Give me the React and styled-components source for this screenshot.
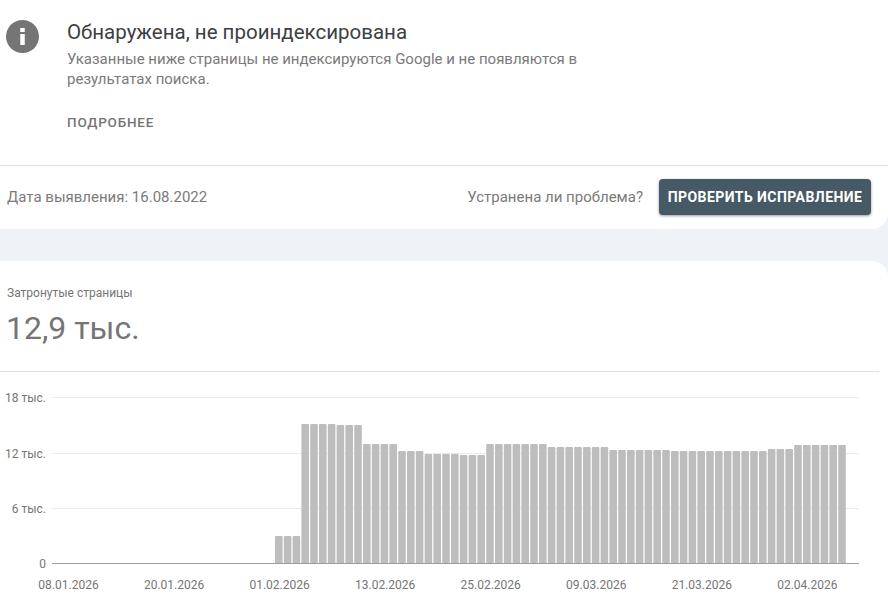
import React from "react"
import styled, { createGlobalStyle } from "styled-components"

const GlobalStyle = createGlobalStyle`
  html, body {
    margin: 0;
    padding: 0;
    height: 100%;
    overflow: hidden;
    background: #eff3f8;
    font-family: Roboto, "Noto Sans", sans-serif;
  }
`

const Page = styled.div`
  width: 888px;
  height: 607px;
  display: flex;
  flex-direction: column;
  gap: 32px;
  overflow: hidden;
`

const IssueCard = styled.section`
  background: #fff;
  height: 229px;
  border-bottom-right-radius: 16px;
  display: flex;
  flex-direction: column;
`

const IssueHead = styled.div`
  height: 166px;
  box-sizing: border-box;
  padding: 20px 0 0 6px;
  display: flex;
  gap: 28px;
  border-bottom: 1px solid #e0e0e0;
`

const InfoIcon = styled.svg`
  width: 33px;
  height: 33px;
  flex: none;
`

const IssueText = styled.div`
  width: 540px;
`

const Title = styled.h1`
  margin: 0;
  font-size: 20.5px;
  line-height: 24px;
  font-weight: 400;
  color: #3c4043;
`

const Description = styled.p`
  margin: 5px 0 0;
  font-size: 15px;
  line-height: 20px;
  color: #7a7a7a;
`

const MoreLink = styled.a`
  display: block;
  margin-top: 25px;
  font-size: 13.5px;
  line-height: 16px;
  font-weight: 500;
  letter-spacing: 0.8px;
  color: #757575;
`

const IssueFooter = styled.div`
  flex: 1;
  display: flex;
  align-items: flex-start;
  justify-content: space-between;
  padding: 13px 17px 0 7px;
`

const FoundDate = styled.span`
  font-size: 15px;
  line-height: 36px;
  color: #7a7a7a;
`

const FixGroup = styled.div`
  display: flex;
  align-items: center;
  gap: 16px;
`

const FixQuestion = styled.span`
  font-size: 15px;
  color: #7a7a7a;
`

const ValidateButton = styled.button`
  height: 36px;
  width: 212px;
  padding: 0;
  border: 0;
  border-radius: 4px;
  background: #455a64;
  color: #fff;
  font-family: inherit;
  font-size: 14px;
  font-weight: 700;
  letter-spacing: 0.44px;
  box-shadow: 0 1px 3px rgba(0, 0, 0, 0.4);
`

const ChartCard = styled.section`
  flex: 1;
  background: #fff;
  border-top-right-radius: 16px;
  display: flex;
  flex-direction: column;
`

const Summary = styled.div`
  height: 111px;
  width: 879px;
  box-sizing: border-box;
  padding: 24px 0 0 6px;
  border-bottom: 1px solid #e0e0e0;
`

const SummaryLabel = styled.div`
  margin-left: 1px;
  font-size: 12px;
  line-height: 16px;
  color: #757575;
`

const SummaryValue = styled.div`
  margin-top: 7px;
  font-size: 32px;
  line-height: 40px;
  color: #757575;
`

const ChartSvg = styled.svg`
  display: block;
  width: 888px;
  height: 235px;
  font-family: Roboto, sans-serif;
  font-size: 12px;
  fill: #757575;
`

// [сколько столбцов подряд, y верхнего края на странице]
const barRuns = [
  [3, 536], [4, 424], [3, 425], [4, 444], [3, 451], [4, 454], [3, 455],
  [7, 444], [7, 447], [7, 450], [11, 451], [3, 449], [6, 445],
]

const CHART_TOP = 372
const BASE_Y = 563.5
const BAR_STEP = 8.8

const bars = barRuns.flatMap(([count, top]) => Array(count).fill(top))

const gridLines = [
  { y: 397.5, label: "18 тыс." },
  { y: 453.5, label: "12 тыс." },
  { y: 508.5, label: "6 тыс." },
]

const dates = [
  "08.01.2026", "20.01.2026", "01.02.2026", "13.02.2026",
  "25.02.2026", "09.03.2026", "21.03.2026", "02.04.2026",
]

const Chart = () => (
  <ChartSvg viewBox={`0 ${CHART_TOP} 888 235`}>
    {gridLines.map(line => (
      <g key={line.label}>
        <line x1="52" x2="859" y1={line.y} y2={line.y} stroke="#ebebeb" />
        <text x="46" y={line.y + 4} textAnchor="end">{line.label}</text>
      </g>
    ))}
    <text x="46" y={BASE_Y + 4} textAnchor="end">0</text>
    {bars.map((top, index) => (
      <rect
        key={index}
        x={275 + index * BAR_STEP}
        y={top}
        width="7.6"
        height={BASE_Y - top}
        rx="1"
        fill="#bdbdbd"
      />
    ))}
    <line x1="52" x2="859" y1={BASE_Y} y2={BASE_Y} stroke="#9e9e9e" />
    {dates.map((date, index) => (
      <text key={date} x={68.5 + index * 105.55} y="589" textAnchor="middle">{date}</text>
    ))}
  </ChartSvg>
)

export default function App() {
  return (
    <Page>
      <GlobalStyle />
      <IssueCard>
        <IssueHead>
          <InfoIcon viewBox="0 0 33 33">
            <circle cx="16.5" cy="16.5" r="16.5" fill="#757575" />
            <rect x="14.25" y="8" width="4.5" height="4" fill="#fff" />
            <rect x="14.25" y="14" width="4.5" height="11" fill="#fff" />
          </InfoIcon>
          <IssueText>
            <Title>Обнаружена, не проиндексирована</Title>
            <Description>
              Указанные ниже страницы не индексируются Google и не появляются в результатах поиска.
            </Description>
            <MoreLink>ПОДРОБНЕЕ</MoreLink>
          </IssueText>
        </IssueHead>
        <IssueFooter>
          <FoundDate>Дата выявления: 16.08.2022</FoundDate>
          <FixGroup>
            <FixQuestion>Устранена ли проблема?</FixQuestion>
            <ValidateButton>ПРОВЕРИТЬ ИСПРАВЛЕНИЕ</ValidateButton>
          </FixGroup>
        </IssueFooter>
      </IssueCard>
      <ChartCard>
        <Summary>
          <SummaryLabel>Затронутые страницы</SummaryLabel>
          <SummaryValue>12,9 тыс.</SummaryValue>
        </Summary>
        <Chart />
      </ChartCard>
    </Page>
  )
}
